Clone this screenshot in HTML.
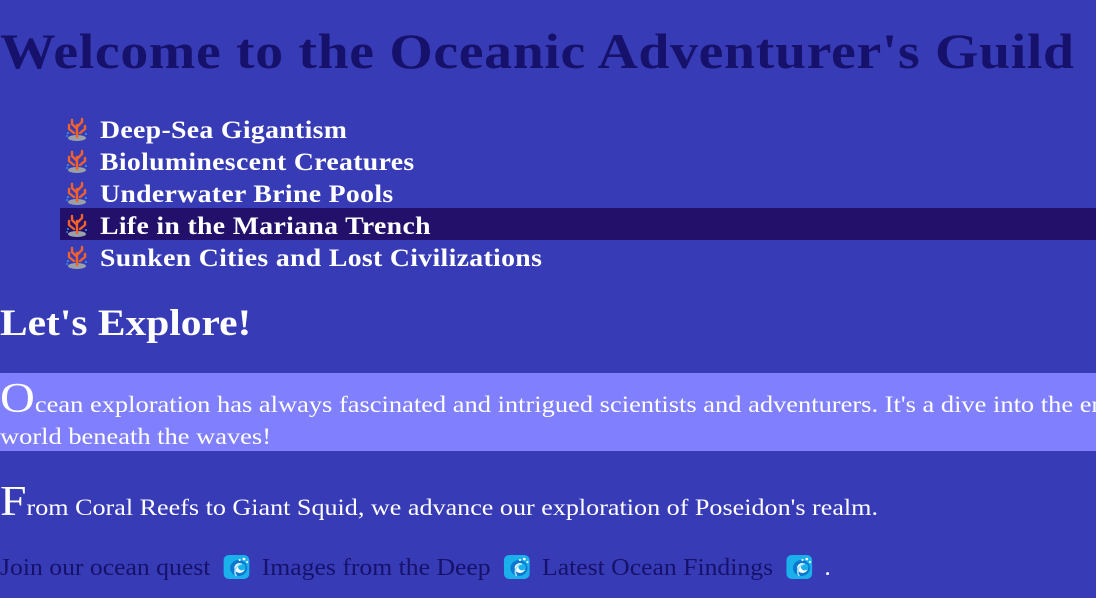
<!DOCTYPE html>
<html><head><meta charset="utf-8"><style>
body{margin:0;width:1096px;height:598px;overflow:hidden;background:#373bb6;font-family:"Liberation Serif",serif;position:relative}
.a{position:absolute;white-space:nowrap;transform-origin:0 50%}
h1{position:absolute;left:0;top:22px;margin:0;font-size:50px;color:#16126b;font-weight:bold;letter-spacing:0.6px;white-space:nowrap;transform:scaleX(1.115);transform-origin:0 50%}
.li{position:absolute;left:60px;width:1036px;height:32px;color:#fff;font-weight:bold;font-size:25px;line-height:32px}
.li span{position:absolute;left:40px;top:3px;letter-spacing:0.3px;transform:scaleX(1.11);transform-origin:0 50%;white-space:nowrap}
.li svg{position:absolute;left:5px;top:5px}
.hl{background:#22106b}
.p1{position:absolute;left:0;top:373px;width:1096px;height:78px;background:#8080ff;color:#fff;font-size:23px;overflow:hidden}
.cap{font-size:42px}
</style></head><body>
<h1>Welcome to the Oceanic Adventurer's Guild</h1>

<svg width="0" height="0" style="position:absolute"><defs>
<g id="coral"><ellipse cx="12" cy="21" rx="9" ry="3" fill="#9aa0a8"/>
<path d="M12 20V8M12 12L7 7M7 7V3M12 10L17 5M17 5V2M9 16L4 12M4 12V8M15 16L20 12M20 12V9" stroke="#f4622a" stroke-width="2.4" fill="none" stroke-linecap="round"/>
<circle cx="3" cy="16" r="1" fill="#2ea0f0"/><circle cx="21" cy="17" r="1" fill="#2ea0f0"/><circle cx="2" cy="19" r="0.9" fill="#2ea0f0"/></g>
<g id="wave"><rect x="1" y="1" width="24" height="24" rx="5" fill="#1ab0ec"/><circle cx="15" cy="14" r="8" fill="#0a78d0"/><circle cx="16" cy="14" r="5" fill="#fff"/><circle cx="18" cy="13" r="3.5" fill="#1ab0ec"/><path d="M13 22C10 18 12 11 18 10" stroke="#9be0ff" stroke-width="1.5" fill="none"/><circle cx="20" cy="5" r="1.3" fill="#fff"/><circle cx="23" cy="8" r="1" fill="#fff"/><circle cx="16" cy="6" r="1" fill="#fff"/></g>
</defs></svg>

<div class="li" style="top:112px"><svg width="26" height="24"><use href="#coral"/></svg><span>Deep-Sea Gigantism</span></div>
<div class="li" style="top:144px"><svg width="26" height="24"><use href="#coral"/></svg><span>Bioluminescent Creatures</span></div>
<div class="li" style="top:176px"><svg width="26" height="24"><use href="#coral"/></svg><span>Underwater Brine Pools</span></div>
<div class="li hl" style="top:208px"><svg width="26" height="24"><use href="#coral"/></svg><span>Life in the Mariana Trench</span></div>
<div class="li" style="top:240px"><svg width="26" height="24"><use href="#coral"/></svg><span>Sunken Cities and Lost Civilizations</span></div>

<div class="a" style="left:0;top:302px;font-size:37px;font-weight:bold;color:#fff;transform:scaleX(1.12)">Let's Explore!</div>

<div class="p1"><div class="a" style="left:0;top:6px;line-height:40px;transform:scaleX(1.15)"><span class="cap">O</span>cean exploration has always fascinated and intrigued scientists and adventurers. It's a dive into the enigmatic</div>
<div class="a" style="left:0;top:50px;line-height:28px;transform:scaleX(1.15)">world beneath the waves!</div></div>

<div class="a" style="left:0;top:480px;font-size:23px;color:#fff;line-height:44px;transform:scaleX(1.135)"><span class="cap">F</span>rom Coral Reefs to Giant Squid, we advance our exploration of Poseidon's realm.</div>

<div class="a" style="left:0;top:553px;font-size:24px;color:#16126b;line-height:30px;transform:scaleX(1.07)">Join our ocean quest <svg width="26" height="26" style="vertical-align:-5px;margin:0 5px"><use href="#wave"/></svg> Images from the Deep <svg width="26" height="26" style="vertical-align:-5px;margin:0 5px"><use href="#wave"/></svg> Latest Ocean Findings <svg width="26" height="26" style="vertical-align:-5px;margin:0 5px"><use href="#wave"/></svg> <span style="color:#fff">.</span></div>
</body></html>
